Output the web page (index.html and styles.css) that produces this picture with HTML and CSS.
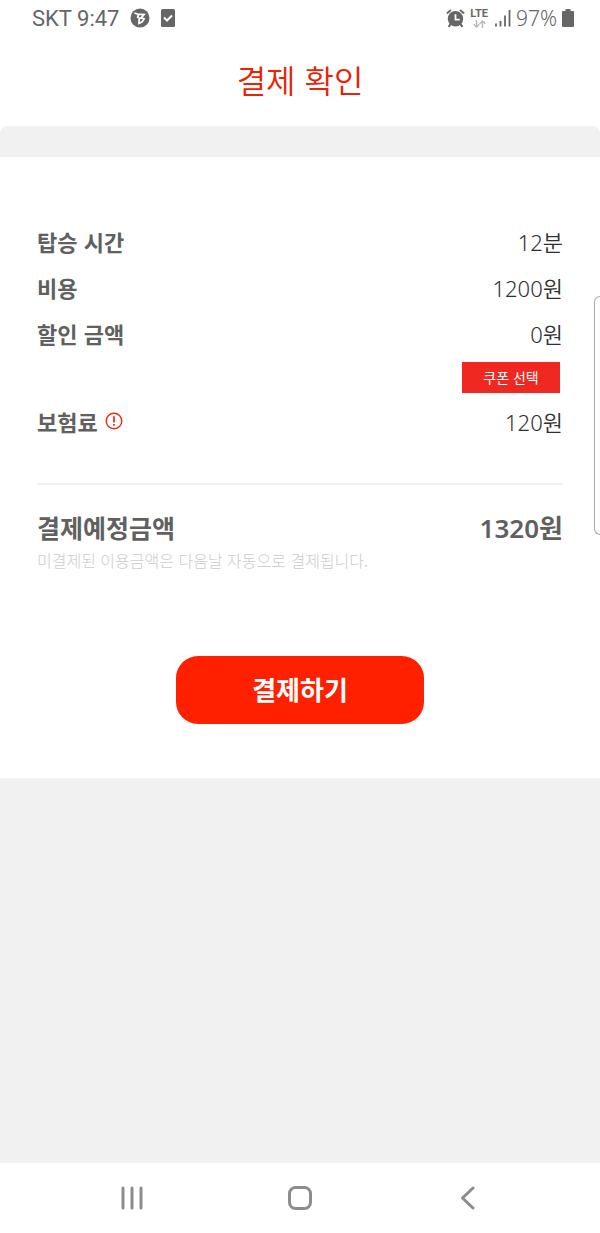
FILE: index.html
```html
<!DOCTYPE html>
<html lang="ko">
<head>
<meta charset="utf-8">
<meta name="viewport" content="width=device-width, initial-scale=1">
<title>결제 확인</title>
<link rel="stylesheet" href="styles.css">
</head>
<body>
<div class="status">
  <div class="status-side">
    <span class="carrier">SKT 9:47</span>
    <svg width="20" height="20" viewBox="0 0 20 20" aria-hidden="true"><circle cx="10" cy="10" r="9.500" fill="#666"/><path d="M4.500 5l3.200 1.200 6.300.3-2.800 3.300 2.800 1.200-1.800 2.800-3.200 1.500.3-5 1.900-.5M8.500 6.500L7.500 10" fill="none" stroke="#fff" stroke-width="1.800"/></svg>
    <svg width="14" height="18" viewBox="0 0 14 18" aria-hidden="true"><rect width="14" height="18" rx="1.500" fill="#666"/><path d="M3 8.500l3 3 5-5" fill="none" stroke="#fff" stroke-width="2"/></svg>
  </div>
  <div class="status-side status-right">
    <svg width="19" height="19" viewBox="0 0 18 18" aria-hidden="true"><path d="M.8 4.200L4.600 1M17.200 4.200L13.400 1" stroke="#666" stroke-width="1.800"/><path d="M4.500 14l-2 3M13.500 14l2 3" stroke="#666" stroke-width="2"/><circle cx="9" cy="9.200" r="7.300" fill="#666"/><path d="M9 5v5h4" fill="none" stroke="#fff" stroke-width="1.700"/></svg>
    <span class="lte">LTE<svg width="13" height="8" viewBox="0 0 13 8" aria-hidden="true"><path d="M3.500 0v7M.7 4.200l2.800 2.800 2.800-2.800M9.500 8V1M6.700 3.800L9.500 1l2.800 2.800" fill="none" stroke="#bbb" stroke-width="1.500"/></svg></span>
    <svg width="16" height="18" viewBox="0 0 16 18" aria-hidden="true"><path d="M1 17.500v-3M5.500 17.500V12M10 17.500V6.500M14.500 17.500V1" stroke="#666" stroke-width="1.800"/></svg>
    <span class="percent">97%</span>
    <svg width="12" height="18" viewBox="0 0 12 18" aria-hidden="true"><path d="M3.500 0h5v2H11q1 0 1 1v14q0 1-1 1H1q-1 0-1-1V3q0-1 1-1h2.500z" fill="#666"/></svg>
  </div>
</div>
<header class="header"><h1>결제 확인</h1></header>
<main class="main">
  <section class="card">
    <dl class="rows">
      <div class="row"><dt>탑승 시간</dt><dd>12분</dd></div>
      <div class="row"><dt>비용</dt><dd>1200원</dd></div>
      <div class="row"><dt>할인 금액</dt><dd>0원</dd></div>
    </dl>
    <button class="coupon" type="button">쿠폰 선택</button>
    <dl class="rows">
      <div class="row"><dt>보험료 <svg width="18" height="18" viewBox="0 0 18 18" aria-hidden="true"><circle cx="9" cy="9" r="7.800" fill="none" stroke="#ea2a12" stroke-width="1.400"/><path d="M9 4.300v6.200M9 12v1.700" stroke="#ea2a12" stroke-width="1.700"/></svg></dt><dd>120원</dd></div>
    </dl>
    <hr class="line">
    <dl class="rows total">
      <div class="row"><dt>결제예정금액</dt><dd>1320원</dd></div>
    </dl>
    <p class="note">미결제된 이용금액은 다음날 자동으로 결제됩니다.</p>
    <button class="pay" type="button">결제하기</button>
  </section>
</main>
<nav class="nav">
  <button type="button" aria-label="최근 앱"><svg width="24" height="24" viewBox="0 0 24 24"><path d="M3 2v20M12 2v20M21 2v20"/></svg></button>
  <button type="button" aria-label="홈"><svg width="24" height="24" viewBox="0 0 24 24"><rect x="1.500" y="1.500" width="21" height="21" rx="6"/></svg></button>
  <button type="button" aria-label="뒤로"><svg width="24" height="24" viewBox="0 0 24 24"><path d="M17 2L6.500 12 17 22"/></svg></button>
</nav>
<div class="edge"></div>
</body>
</html>
```

FILE: styles.css
```css
* { box-sizing: border-box; }
body {
  margin: 0;
  min-height: 100vh;
  display: flex;
  flex-direction: column;
  overflow-x: hidden;
  background: #fff;
  color: #303030;
  font-family: "Noto Sans CJK KR", sans-serif;
}
h1, dl, dd, p { margin: 0; }
svg { display: block; flex: none; }
button { border: 0; padding: 0; font-family: inherit; cursor: pointer; }

.status {
  display: flex;
  justify-content: space-between;
  align-items: center;
  height: 36px;
  padding: 0 26px 0 32px;
  color: #666;
  font-family: Roboto, sans-serif;
  font-size: 22px;
}
.status-side { display: flex; align-items: center; gap: 11px; }
.status-right { gap: 5px; }
.percent { font-family: "Noto Sans", sans-serif; font-size: 21px; font-weight: 350; }
.lte {
  display: flex;
  flex-direction: column;
  align-items: center;
  gap: 1px;
  margin-right: 2px;
  font-size: 11px;
  line-height: 11px;
  font-weight: 700;
}

.header {
  height: 90px;
  padding-bottom: 4px;
  display: flex;
  align-items: center;
  justify-content: center;
}
.header h1 {
  color: #ea2206;
  font-size: 32px;
  line-height: 48px;
  font-weight: 350;
}

.main {
  flex: 1;
  padding-top: 31px;
  background: #f1f1f1;
  border-radius: 8px 8px 0 0;
}
.card {
  display: flex;
  flex-direction: column;
  padding: 61px 37px 54px;
  background: #fff;
}
.row {
  display: flex;
  justify-content: space-between;
  align-items: center;
  height: 46px;
  font-size: 22px;
}
.row dt {
  display: flex;
  align-items: center;
  gap: 7px;
  color: #606060;
  font-weight: 700;
}
.row dd {
  font-family: "Noto Sans", "Noto Sans CJK KR", sans-serif;
  font-weight: 350;
}
.coupon {
  align-self: flex-end;
  width: 98px;
  height: 31px;
  margin: 6px 3px 5px 0;
  padding-bottom: 1px;
  background: #ef2922;
  color: #fff;
  font-size: 14px;
}
.line {
  width: 100%;
  height: 2px;
  margin: 39px 0 19px;
  border: 0;
  background: #f1f1f1;
}
.total .row { color: #606060; font-size: 25px; }
.total dd { color: #606060; font-size: 26px; font-weight: 600; }
.note {
  margin-top: -2px;
  color: #ccc;
  font-size: 16px;
  line-height: 24px;
  font-weight: 300;
}
.pay {
  align-self: center;
  width: 248px;
  height: 68px;
  margin-top: 84px;
  padding-bottom: 4px;
  border-radius: 22px;
  background: #ff2000;
  color: #fff;
  font-size: 26px;
  font-weight: 700;
}

.nav {
  display: flex;
  justify-content: space-around;
  align-items: center;
  height: 70px;
  padding: 0 48px;
}
.nav button { padding: 12px; background: none; }
.nav svg {
  fill: none;
  stroke: #8c8c8c;
  stroke-width: 3;
  stroke-linecap: round;
  stroke-linejoin: round;
}

/* Edge panel handle floating over the right side of the screen */
.edge {
  position: absolute;
  top: 296px;
  right: 0;
  width: 6px;
  height: 239px;
  border: 1px solid #aaa;
  border-right: 0;
  border-radius: 8px 0 0 8px;
  background: #fff;
}
```
